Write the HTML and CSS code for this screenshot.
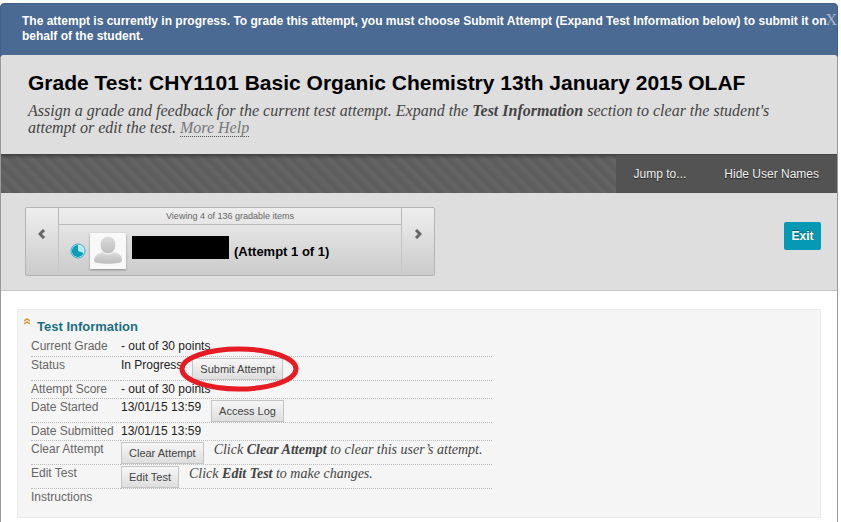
FILE: index.html
```
<!DOCTYPE html>
<html lang="en">
<head>
    <meta charset="UTF-8">
    <meta name="viewport" content="width=device-width, initial-scale=1.0">
    <title>Grade Test</title>
    <link rel="stylesheet" href="styles.css">
</head>
<body>
    <div class="notice">
        <p>The attempt is currently in progress. To grade this attempt, you must choose Submit Attempt (Expand Test Information below) to submit it on behalf of the student.</p>
        <button type="button" class="notice-close">X</button>
    </div>
    <div class="page">
        <header class="page-title">
            <h1>Grade Test: CHY1101 Basic Organic Chemistry 13th January 2015 OLAF</h1>
            <p class="help">Assign a grade and feedback for the current test attempt. Expand the <strong>Test Information</strong> section to clear the student's attempt or edit the test. <a href="#">More Help</a></p>
        </header>
        <nav class="action-bar">
            <div class="actions">
                <a href="#">Jump to...</a>
                <a href="#">Hide User Names</a>
            </div>
        </nav>
        <section class="pager-area">
            <div class="pager">
                <button type="button" class="pager-btn" aria-label="Previous">
                    <svg width="8" height="10" viewBox="0 0 8 10"><path d="M6 1 L2 5 L6 9" fill="none" stroke="#666" stroke-width="3"/></svg>
                </button>
                <div class="pager-body">
                    <div class="pager-count">Viewing 4 of 136 gradable items</div>
                    <div class="pager-user">
                        <svg class="progress-icon" width="16" height="16" viewBox="0 0 16 16">
                            <circle cx="8" cy="8" r="7" fill="#d5f3f8" stroke="#35aac4" stroke-width="1"/>
                            <circle cx="8" cy="8" r="5.5" fill="#b4e9f2"/>
                            <path d="M8 8 V2 A6 6 0 1 0 13.5 10 Z" fill="#0c9dba"/>
                        </svg>
                        <svg class="avatar" width="36" height="36" viewBox="0 0 36 36">
                            <defs>
                                <linearGradient id="person" x1="0" y1="0" x2="0" y2="1">
                                    <stop offset="0" stop-color="#dedede"/>
                                    <stop offset="1" stop-color="#bcbcbc"/>
                                </linearGradient>
                            </defs>
                            <rect width="36" height="36" fill="#f8f8f8"/>
                            <path d="M4 27 C4 22 10 20 13 19 C16 22 21 22 24 19 C28 20 32 22 32 27 C32 29 30 30 28 30 C22 31 14 31 8 30 C6 30 4 29 4 27 Z" fill="url(#person)"/>
                            <ellipse cx="18" cy="12" rx="8" ry="9" fill="url(#person)" stroke="#f8f8f8" stroke-width="1"/>
                        </svg>
                        <span class="redacted"></span>
                        <strong>(Attempt 1 of 1)</strong>
                    </div>
                </div>
                <button type="button" class="pager-btn" aria-label="Next">
                    <svg width="8" height="10" viewBox="0 0 8 10"><path d="M2 1 L6 5 L2 9" fill="none" stroke="#666" stroke-width="3"/></svg>
                </button>
            </div>
            <button type="button" class="exit">Exit</button>
        </section>
        <main>
            <section class="panel">
                <h2>
                    <svg width="6" height="7" viewBox="0 0 6 7"><path d="M0 3 L3 1 L6 3 M0 6 L3 4 L6 6" fill="none" stroke="#d09a3c" stroke-width="1.5"/></svg>
                    Test Information
                </h2>
                <table class="info">
                    <tr>
                        <th scope="row">Current Grade</th>
                        <td>- out of 30 points</td>
                    </tr>
                    <tr class="tall">
                        <th scope="row">Status</th>
                        <td><div class="cell">In Progress
                            <span class="highlight">
                                <button type="button" class="btn">Submit Attempt</button>
                                <svg class="ring" width="122" height="46" viewBox="0 0 122 46"><ellipse cx="61" cy="23" rx="57" ry="20" fill="none" stroke="#e51c23" stroke-width="5"/></svg>
                            </span>
                        </div></td>
                    </tr>
                    <tr>
                        <th scope="row">Attempt Score</th>
                        <td>- out of 30 points</td>
                    </tr>
                    <tr class="tall">
                        <th scope="row">Date Started</th>
                        <td><div class="cell">13/01/15 13:59 <button type="button" class="btn">Access Log</button></div></td>
                    </tr>
                    <tr>
                        <th scope="row">Date Submitted</th>
                        <td>13/01/15 13:59</td>
                    </tr>
                    <tr class="tall">
                        <th scope="row">Clear Attempt</th>
                        <td><div class="cell"><button type="button" class="btn">Clear Attempt</button> <em>Click <strong>Clear Attempt</strong> to clear this user’s attempt.</em></div></td>
                    </tr>
                    <tr class="tall">
                        <th scope="row">Edit Test</th>
                        <td><div class="cell"><button type="button" class="btn">Edit Test</button> <em>Click <strong>Edit Test</strong> to make changes.</em></div></td>
                    </tr>
                    <tr>
                        <th scope="row">Instructions</th>
                        <td></td>
                    </tr>
                </table>
            </section>
        </main>
    </div>
</body>
</html>
```

FILE: styles.css
```
* {
    box-sizing: border-box;
}
body {
    font-family: "Liberation Sans", Arial, sans-serif;
    font-size: 12px;
    background-color: #fff;
    margin: 0;
    padding: 3px 3px 0 0;
    min-height: 100vh;
    display: flex;
    flex-direction: column;
}
h1, h2, p {
    margin: 0;
}
button {
    font-family: inherit;
    cursor: pointer;
}
.notice {
    display: flex;
    justify-content: space-between;
    background-color: #4a6a94;
    border: 1px solid #41608a;
    border-radius: 4px 4px 0 0;
    padding: 10px 0 6px 21px;
    height: 56px;
    color: #fff;
    font-weight: bold;
    line-height: 15px;
}
.notice p {
    flex: 1;
}
.notice-close {
    align-self: flex-start;
    background: none;
    border: none;
    padding: 0;
    margin-left: -4px;
    color: #a3b4ca;
    font-family: "Liberation Serif", serif;
    font-size: 16px;
    line-height: 12px;
}
.page {
    flex: 1;
    margin-top: -4px;
    border-left: 1px solid #999;
    border-right: 1px solid #999;
    border-radius: 4px 4px 0 0;
    background-color: #fff;
}
.page-title {
    background-color: #dedede;
    border-radius: 4px 4px 0 0;
    padding: 15px 60px 18px 27px;
}
h1 {
    font-size: 21px;
    line-height: 26px;
    margin-bottom: 6px;
    color: #000;
    white-space: nowrap;
}
.help, em {
    font-family: "Liberation Serif", Georgia, serif;
    font-style: italic;
    color: #444;
}
.help {
    font-size: 16px;
    line-height: 17px;
}
.help a {
    color: #777;
    text-decoration: none;
    border-bottom: 1px dotted #555;
}
.action-bar {
    display: flex;
    justify-content: flex-end;
    height: 39px;
    border-top: 1px solid #444;
    background: linear-gradient(rgba(0, 0, 0, 0.25), transparent 4px),
        repeating-linear-gradient(45deg, #5c5c5c 0, #626262 5px, #666 6px, #5c5c5c 10px);
}
.actions {
    display: flex;
    align-items: center;
    gap: 38px;
    padding: 0 18px;
    background-color: #535353;
}
.actions a {
    color: #eee;
    font-size: 12px;
    text-decoration: none;
    text-shadow: 0 1px 1px #222;
}
.pager-area {
    display: flex;
    justify-content: space-between;
    align-items: flex-start;
    padding: 14px 16px 14px 24px;
    background-color: #dedede;
    border-bottom: 1px solid #c4c4c4;
}
.pager {
    display: flex;
    width: 410px;
    height: 69px;
    border: 1px solid #b4b4b4;
    border-radius: 2px;
    background: linear-gradient(#eee, #cbcbcb);
}
.pager-btn {
    width: 32px;
    padding: 0 0 14px;
    border: none;
    background: none;
}
.pager-body {
    flex: 1;
    border: solid #bbb;
    border-width: 0 1px;
    border-image: linear-gradient(#b8b8b8, #cbcbcb) 1;
}
.pager-count {
    font-size: 9px;
    line-height: 16px;
    text-align: center;
    color: #666;
    border-bottom: 1px solid #bbb;
}
.pager-user {
    display: flex;
    align-items: center;
    padding: 8px 0 0 11px;
    font-size: 13px;
    color: #000;
}
.avatar {
    margin: 0 6px 0 4px;
    box-shadow: 0 1px 2px #888;
}
.redacted {
    width: 97px;
    height: 23px;
    margin: 0 5px 8px 0;
    background-color: #000;
}
.exit {
    margin-top: 15px;
    width: 37px;
    height: 28px;
    padding: 0;
    border: none;
    border-radius: 2px;
    background-color: #0699b5;
    color: #fff;
    font-size: 12px;
    font-weight: bold;
    text-shadow: 0 -1px 1px #056;
}
main {
    padding: 18px 16px 4px;
}
.panel {
    padding: 8px 13px 11px;
    background-color: #f5f5f5;
    border: 1px solid #ececec;
}
h2 {
    display: flex;
    gap: 7px;
    margin-left: -7px;
    font-size: 13px;
    line-height: 18px;
    color: #1c6f80;
}
.info {
    width: 461px;
    margin-top: 2px;
    border-collapse: collapse;
    color: #222;
    line-height: 17px;
}
.info th, .info td {
    height: 18px;
    padding: 0;
    vertical-align: top;
    text-align: left;
    border-bottom: 1px dotted #bbb;
}
.info th {
    width: 90px;
    font-weight: normal;
    color: #666;
    white-space: nowrap;
}
.info .tall th, .info .tall td {
    height: 24px;
}
.info tr:last-child th, .info tr:last-child td {
    border-bottom: none;
}
.cell {
    display: flex;
    gap: 10px;
    height: 23px;
}
.btn {
    height: 22px;
    margin-top: 1px;
    padding: 0 7px;
    border: 1px solid #c4c4c4;
    background: linear-gradient(#f6f6f6, #dedede);
    color: #444;
    font-size: 11px;
    white-space: nowrap;
}
em {
    font-size: 14px;
    line-height: 18px;
    white-space: nowrap;
}
.highlight {
    position: relative;
}
.ring {
    position: absolute;
    left: -14px;
    top: -11px;
    pointer-events: none;
}
```
